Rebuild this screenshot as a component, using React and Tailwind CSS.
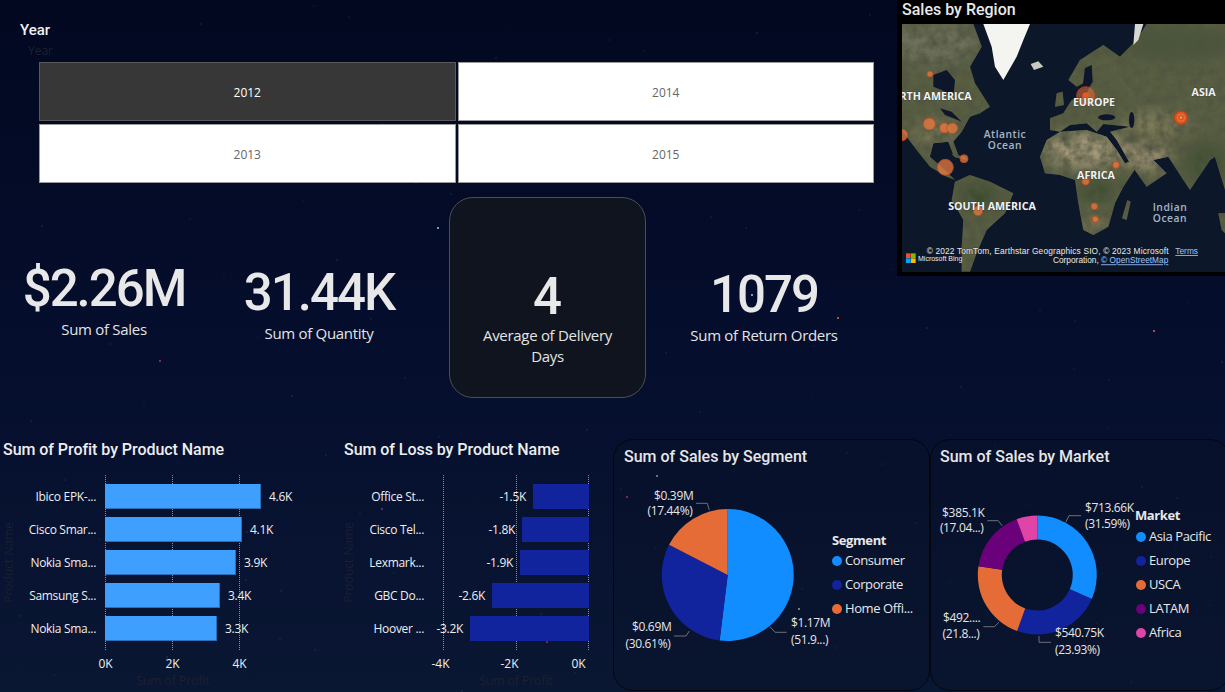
import React from "react";

const profit = [
  { name: "Ibico EPK-...", value: "4.6K", w: 156 },
  { name: "Cisco Smar...", value: "4.1K", w: 137 },
  { name: "Nokia Sma...", value: "3.9K", w: 131 },
  { name: "Samsung S...", value: "3.4K", w: 115 },
  { name: "Nokia Sma...", value: "3.3K", w: 112 },
];

const loss = [
  { name: "Office St...", value: "-1.5K", w: 56 },
  { name: "Cisco Tel...", value: "-1.8K", w: 67 },
  { name: "Lexmark...", value: "-1.9K", w: 69 },
  { name: "GBC Do...", value: "-2.6K", w: 97 },
  { name: "Hoover ...", value: "-3.2K", w: 119 },
];

const segments = [
  { name: "Consumer", pct: 51.95, color: "#118DFF" },
  { name: "Corporate", pct: 30.61, color: "#12239E" },
  { name: "Home Offi...", pct: 17.44, color: "#E66C37" },
];

const markets = [
  { name: "Asia Pacific", pct: 31.59, color: "#118DFF" },
  { name: "Europe", pct: 23.93, color: "#12239E" },
  { name: "USCA", pct: 21.8, color: "#E66C37" },
  { name: "LATAM", pct: 17.04, color: "#6B007B" },
  { name: "Africa", pct: 5.64, color: "#E044A7" },
];

const bubbles = [
  [120, 222, 9], [118, 372, 18], [163, 384, 15], [187, 385, 16], [36, 405, 17],
  [166, 502, 24], [222, 476, 12], [264, 633, 14], [678, 495, 10], [587, 544, 11],
  [613, 619, 10], [616, 658, 9],
];

const brightStars = [
  [438, 228, "#9fc4ff"], [752, 295, "#9fc4ff"], [657, 476, "#cfe0ff"], [799, 609, "#ffe8f0"],
  [838, 318, "#ff5a5a"], [1154, 331, "#ff5a5a"], [160, 361, "#a04050"], [498, 217, "#703040"],
  [627, 497, "#ff5a5a"], [547, 642, "#a03040"], [382, 509, "#7030a0"],
];

// dim specks for the night sky
const dimStars = Array.from({ length: 130 }, (_, i) => ({
  x: (i * 397 + 53) % 1225,
  y: (i * 211 + 31) % 692,
  o: 0.1 + ((i * 7) % 5) * 0.04,
}));

function arcs(items, cx, cy, r, inner) {
  let start = 0;
  return items.map((item) => {
    const a0 = (start / 100) * Math.PI * 2;
    start += item.pct;
    const a1 = (start / 100) * Math.PI * 2;
    const large = a1 - a0 > Math.PI ? 1 : 0;
    const p = (rad, a) => `${cx + rad * Math.sin(a)} ${cy - rad * Math.cos(a)}`;
    const d = inner
      ? `M${p(r, a0)} A${r} ${r} 0 ${large} 1 ${p(r, a1)} L${p(inner, a1)} A${inner} ${inner} 0 ${large} 0 ${p(inner, a0)} Z`
      : `M${cx} ${cy} L${p(r, a0)} A${r} ${r} 0 ${large} 1 ${p(r, a1)} Z`;
    return <path key={item.name} d={d} fill={item.color} />;
  });
}

function ChartLabel({ x, y, anchor = "middle", children }) {
  return (
    <text x={x} y={y} textAnchor={anchor} fontSize="12" letterSpacing="-0.35" fill="#e6e6e6" dominantBaseline="middle">
      {children}
    </text>
  );
}

function Leader({ points }) {
  return <polyline points={points} fill="none" stroke="#6b7078" strokeWidth="1" />;
}

function Grid({ positions }) {
  return positions.map((x) => (
    <div key={x} className="absolute top-0 bottom-0 w-0 border-l border-dotted border-[#8a8f98]" style={{ left: x }} />
  ));
}

function AxisTitle({ children }) {
  return <div className="text-[12px] leading-4 text-[#1c2030]">{children}</div>;
}

function ProfitChart() {
  return (
    <div className="w-[340px] shrink-0 pl-[3px]">
      <h2 className="h-[37px] pt-[2px] font-['Roboto',sans-serif] text-[16px] font-medium leading-[20px] text-[#eeeeee] tracking-[-0.05px]">
        Sum of Profit by Product Name
      </h2>
      <div className="flex">
        <div className="flex w-[12px] items-center justify-center">
          <div className="rotate-180 [writing-mode:vertical-rl]">
            <AxisTitle>Product Name</AxisTitle>
          </div>
        </div>
        <div className="flex w-[81px] flex-col gap-2 pt-[9px] text-right text-[12px] leading-[25px] tracking-[-0.3px] text-[#eeeeee]">
          {profit.map((row, i) => (
            <div key={i} className="h-[25px] truncate">{row.name}</div>
          ))}
        </div>
        <div className="relative ml-[9px] h-[175px] w-[200px]">
          <Grid positions={[0, 67, 134]} />
          <div className="relative flex flex-col gap-2 pt-[9px]">
            {profit.map((row, i) => (
              <div key={i} className="flex h-[25px] items-center">
                <div className="h-[25px] shrink-0 border-r border-b border-[#2a6fb5] bg-[#3f9fff]" style={{ width: row.w }} />
                <span className="ml-2 text-[12px] tracking-[-0.3px] text-[#eeeeee]">{row.value}</span>
              </div>
            ))}
          </div>
        </div>
      </div>
      <div className="ml-[69px] mt-[6px] flex text-center text-[12px] leading-4 text-[#eeeeee]">
        <span className="w-[67px]">0K</span>
        <span className="w-[67px]">2K</span>
        <span className="w-[67px]">4K</span>
      </div>
      <div className="ml-[103px] mt-[1px] w-[134px] text-center"><AxisTitle>Sum of Profit</AxisTitle></div>
    </div>
  );
}

function LossChart() {
  return (
    <div className="w-[273px] shrink-0 pl-[4px]">
      <h2 className="h-[37px] pt-[2px] font-['Roboto',sans-serif] text-[16px] font-medium leading-[20px] text-[#eeeeee] tracking-[-0.05px]">
        Sum of Loss by Product Name
      </h2>
      <div className="flex">
        <div className="flex w-[10px] items-center justify-center">
          <div className="rotate-180 [writing-mode:vertical-rl]">
            <AxisTitle>Product Name</AxisTitle>
          </div>
        </div>
        <div className="flex w-[70px] flex-col gap-2 pt-[9px] text-right text-[12px] leading-[25px] tracking-[-0.3px] text-[#eeeeee]">
          {loss.map((row, i) => (
            <div key={i} className="h-[25px] truncate">{row.name}</div>
          ))}
        </div>
        <div className="relative ml-[19px] h-[175px] w-[146px]">
          <Grid positions={[0, 73, 145]} />
          <div className="relative flex flex-col gap-2 pt-[9px]">
            {loss.map((row, i) => (
              <div key={i} className="flex h-[25px] items-center justify-end">
                <span className="mr-[7px] shrink-0 text-[12px] tracking-[-0.3px] text-[#eeeeee]">{row.value}</span>
                <div className="h-[25px] shrink-0 bg-[#12239E]" style={{ width: row.w }} />
              </div>
            ))}
          </div>
        </div>
      </div>
      <div className="ml-[62px] mt-[6px] flex text-center text-[12px] leading-4 text-[#eeeeee]">
        <span className="w-[73px]">-4K</span>
        <span className="w-[73px]">-2K</span>
        <span className="w-[73px]">0K</span>
      </div>
      <div className="ml-[99px] mt-[1px] w-[146px] text-center"><AxisTitle>Sum of Profit</AxisTitle></div>
    </div>
  );
}

function Legend({ title, items, className, rowsClassName }) {
  return (
    <div className={`${className} text-[13px] tracking-[-0.4px] text-[#e8e8e8]`}>
      <div className="h-[18px] text-[13px] font-bold leading-[18px]">{title}</div>
      <div className={`flex flex-col ${rowsClassName}`}>
        {items.map((item) => (
          <div key={item.name} className="flex h-[24px] items-center gap-[3px] whitespace-nowrap">
            <span className="size-[10px] shrink-0 rounded-full" style={{ background: item.color }} />
            {item.name}
          </div>
        ))}
      </div>
    </div>
  );
}

function SegmentCard() {
  return (
    <section className="mt-[1px] h-[252px] w-[317px] shrink-0 rounded-[20px] border border-[#05070f] bg-[#0a1129]/40 pl-[10px] pt-[7px]">
      <h2 className="h-[33px] font-['Roboto',sans-serif] text-[16px] font-medium leading-[20px] text-[#e6e6e6]">
        Sum of Sales by Segment
      </h2>
      <div className="-ml-[10px] flex">
        <svg viewBox="614 480 216 190" className="h-[190px] w-[216px] shrink-0 overflow-visible">
          {arcs(segments, 727.7, 575, 66)}
          <Leader points="696,503.3 707.3,503.3 709.3,510" />
          <Leader points="674,636 686,636 689.3,631" />
          <Leader points="770,626.7 775,632.3 786.7,632.3" />
          <ChartLabel x={673.7} y={497}>$0.39M</ChartLabel>
          <ChartLabel x={670} y={512}>(17.44%)</ChartLabel>
          <ChartLabel x={651.7} y={628}>$0.69M</ChartLabel>
          <ChartLabel x={648} y={645}>(30.61%)</ChartLabel>
          <ChartLabel x={791} y={624} anchor="start">$1.17M</ChartLabel>
          <ChartLabel x={791} y={641} anchor="start">(51.9...)</ChartLabel>
        </svg>
        <Legend title="Segment" items={segments} className="ml-[2px] mt-[51px]" />
      </div>
    </section>
  );
}

function MarketCard() {
  return (
    <section className="mt-[1px] h-[252px] w-[300px] shrink-0 rounded-[20px] border border-[#05070f] bg-[#0a1129]/40 pl-[9px] pt-[7px]">
      <h2 className="h-[33px] font-['Roboto',sans-serif] text-[16px] font-medium leading-[20px] text-[#e6e6e6]">
        Sum of Sales by Market
      </h2>
      <div className="-ml-[9px] flex">
        <svg viewBox="931 480 204 190" className="h-[190px] w-[204px] shrink-0 overflow-visible">
          {arcs(markets, 1037.3, 575, 59.5, 35.5)}
          <Leader points="1065.7,522.3 1069,515.7 1081,515.7" />
          <Leader points="987.3,520.7 998.3,520.7 1002.3,526" />
          <Leader points="983.3,626.7 994.3,626.7 999,622.3" />
          <Leader points="1039,636 1039,642.3 1051,642.3" />
          <ChartLabel x={1085} y={509} anchor="start">$713.66K</ChartLabel>
          <ChartLabel x={1085} y={525} anchor="start">(31.59%)</ChartLabel>
          <ChartLabel x={963.3} y={514}>$385.1K</ChartLabel>
          <ChartLabel x={961.7} y={529}>(17.04...)</ChartLabel>
          <ChartLabel x={961.7} y={619}>$492....</ChartLabel>
          <ChartLabel x={961} y={635}>(21.8...)</ChartLabel>
          <ChartLabel x={1055} y={634} anchor="start">$540.75K</ChartLabel>
          <ChartLabel x={1055} y={651} anchor="start">(23.93%)</ChartLabel>
        </svg>
        <Legend title="Market" items={markets} className="mt-[26px]" rowsClassName="mt-[1px] ml-[1px]" />
      </div>
    </section>
  );
}

// satellite map, drawn in 3x coordinates so it lines up with the zoomed reference
function WorldMap() {
  return (
    <svg viewBox="36 72 969 744" preserveAspectRatio="none" className="block h-[248px] w-[323px]">
      <defs>
        <filter id="soft" x="-10%" y="-10%" width="120%" height="120%"><feGaussianBlur stdDeviation="2" /></filter>
        <filter id="softer" x="-100%" y="-100%" width="300%" height="300%"><feGaussianBlur stdDeviation="22" /></filter>
        <filter id="grain" x="0" y="0" width="100%" height="100%">
          <feTurbulence type="fractalNoise" baseFrequency="0.035" numOctaves="4" seed="7" />
          <feColorMatrix values="0 0 0 0 0.08  0 0 0 0 0.09  0 0 0 0 0.05  0 0 0 1.8 -0.55" />
        </filter>
        <clipPath id="land">
          <path d="M36 72 L250 72 L275 140 L240 200 L255 250 L300 320 L270 340 L240 350 L215 395 L190 425 L205 465 L190 465 L175 425 L130 430 L120 470 L165 510 L195 540 L170 530 L120 500 L80 450 L50 410 L36 390 Z" />
          <path d="M195 545 L240 525 L300 545 L370 580 L345 640 L290 690 L260 760 L240 815 L215 815 L215 740 L220 660 L185 600 Z" />
          <path d="M450 470 L470 420 L510 395 L590 390 L650 410 L680 450 L705 490 L760 470 L700 560 L675 610 L655 680 L610 705 L580 690 L565 610 L555 540 L510 525 L465 520 Z" />
          <path d="M480 390 L480 355 L520 340 L545 300 L590 290 L600 240 L560 260 L535 240 L570 180 L640 135 L690 170 L740 120 L770 72 L1005 72 L1005 570 L975 470 L960 480 L900 570 L880 540 L835 470 L790 480 L830 520 L770 560 L720 490 L680 420 L660 395 L720 380 L640 372 L620 395 L590 370 L540 375 L510 395 Z" />
          <path d="M500 280 L518 275 L522 315 L495 320 Z" />
          <path d="M712 600 L722 605 L710 660 L696 655 Z" />
          <path d="M985 640 L1005 640 L1005 700 L995 690 Z" />
          <path d="M185 462 L225 470 L232 480 L195 472 Z" />
        </clipPath>
      </defs>
      <rect x="36" y="72" width="969" height="744" fill="#0c1829" />
      <g filter="url(#soft)">
        <g clipPath="url(#land)">
          <rect x="36" y="72" width="969" height="744" fill="#585e42" />
          <ellipse cx="130" cy="130" rx="140" ry="60" fill="#6d705c" filter="url(#softer)" />
          <ellipse cx="860" cy="130" rx="170" ry="50" fill="#4a553a" filter="url(#softer)" />
          <ellipse cx="590" cy="450" rx="130" ry="50" fill="#a69a7c" filter="url(#softer)" />
          <ellipse cx="770" cy="470" rx="70" ry="40" fill="#9c8f72" filter="url(#softer)" />
          <ellipse cx="800" cy="370" rx="110" ry="30" fill="#86805e" filter="url(#softer)" />
          <ellipse cx="620" cy="575" rx="45" ry="30" fill="#36482a" filter="url(#softer)" />
          <ellipse cx="265" cy="590" rx="55" ry="35" fill="#34492a" filter="url(#softer)" />
          <ellipse cx="130" cy="400" rx="70" ry="30" fill="#7c7858" filter="url(#softer)" />
          <ellipse cx="610" cy="665" rx="40" ry="30" fill="#7e7552" filter="url(#softer)" />
          <ellipse cx="950" cy="490" rx="60" ry="60" fill="#3f5030" filter="url(#softer)" />
          <rect x="36" y="72" width="969" height="744" filter="url(#grain)" />
        </g>
        <path d="M130 225 L170 210 L195 240 L190 290 L155 270 L130 260 Z" fill="#0c1829" />
        <path d="M150 325 L185 335 L215 365 L190 355 L165 345 Z" fill="#10172a" />
        <ellipse cx="650" cy="352" rx="26" ry="9" fill="#0c1829" />
        <ellipse cx="725" cy="360" rx="8" ry="24" fill="#0c1829" />
        <path d="M585 205 L605 195 L608 245 L590 275 L575 280 Z" fill="#0c1829" />
        <path d="M620 395 L650 378 L664 392 L640 402 Z" fill="#0c1829" />
        <path d="M280 72 L420 72 L400 120 L380 170 L340 240 L315 200 L305 140 Z" fill="#f4f4f0" />
        <path d="M735 72 L760 72 L745 120 L730 135 Z" fill="#d8d8d2" />
        <path d="M422 192 L445 184 L460 200 L432 210 Z" fill="#c9c9c2" />
      </g>
      {bubbles.map(([x, y, r], i) => (
        <circle key={i} cx={x} cy={y} r={r} fill="#ea7a42" fillOpacity="0.75" stroke="#c9471c" strokeWidth="2.5" />
      ))}
      <circle cx="587" cy="287" r="27" fill="#ea7a42" fillOpacity="0.5" stroke="#c9471c" strokeWidth="2.5" />
      <circle cx="587" cy="287" r="19" fill="none" stroke="#c9471c" strokeWidth="2" />
      <circle cx="587" cy="287" r="10" fill="#e8581f" />
      <circle cx="873" cy="353" r="20" fill="#d9541f" stroke="#c03c12" strokeWidth="3" />
      <circle cx="873" cy="353" r="11" fill="none" stroke="#f09060" strokeWidth="2" />
      <circle cx="873" cy="353" r="4" fill="#f09060" />

      <g fontFamily="'Open Sans', sans-serif" fontWeight="700" fontSize="32" fill="#f2f2f2" stroke="#20242c" strokeWidth="1" paintOrder="stroke">
        <text x="245" y="299" textAnchor="end">NORTH AMERICA</text>
        <text x="612" y="317" textAnchor="middle">EUROPE</text>
        <text x="941" y="289" textAnchor="middle">ASIA</text>
        <text x="618" y="536" textAnchor="middle">AFRICA</text>
        <text x="306" y="629" textAnchor="middle">SOUTH AMERICA</text>
      </g>
      <g fontFamily="'Open Sans', sans-serif" fontWeight="600" fontSize="31" fill="#a6b3c4" textAnchor="middle" letterSpacing="1.5">
        <text x="345" y="414">Atlantic</text>
        <text x="345" y="448">Ocean</text>
        <text x="840" y="632">Indian</text>
        <text x="840" y="667">Ocean</text>
      </g>
      <g fontFamily="'Liberation Sans', sans-serif" fontSize="25" fill="#e8e8e8" stroke="#222" strokeWidth="0.8" paintOrder="stroke">
        <text x="110" y="762" textLength="726">© 2022 TomTom, Earthstar Geographics SIO, © 2023 Microsoft</text>
        <text x="835" y="790" textAnchor="end">Corporation, <tspan fill="#9cc3ff" textDecoration="underline">© OpenStreetMap</tspan></text>
        <text x="856" y="762" fill="#9cc3ff" textDecoration="underline">Terms</text>
        <text x="84" y="782" fontSize="21">Microsoft Bing</text>
      </g>
      <rect x="48" y="760" width="14" height="14" fill="#f25022" />
      <rect x="63" y="760" width="14" height="14" fill="#7fba00" />
      <rect x="48" y="775" width="14" height="14" fill="#00a4ef" />
      <rect x="63" y="775" width="14" height="14" fill="#ffb900" />
    </svg>
  );
}

function YearButton({ year, active }) {
  return (
    <div
      className={
        active
          ? "flex h-[59px] items-center justify-center border border-[#5a5a5a] bg-[#373737] pt-[2px] text-[12px] text-white"
          : "flex h-[59px] items-center justify-center border border-[#9a9a9a] bg-white pt-[2px] text-[12px] text-[#666666]"
      }
    >
      {year}
    </div>
  );
}

function Kpi({ value, label, className }) {
  return (
    <div className={`flex flex-col items-center text-center ${className}`}>
      <div className="font-['Roboto',sans-serif] text-[51px] font-medium leading-[56px] tracking-[-2px] text-[#e8e8e8]">
        {value}
      </div>
      <div className="mt-[2px] text-[15px] leading-[21px] text-[#e4e4e4] tracking-[-0.3px]">{label}</div>
    </div>
  );
}

export default function App() {
  return (
    <div className="relative h-[692px] w-[1225px] overflow-hidden bg-gradient-to-b from-[#020820] via-[#050e2d] to-[#0a1733] font-['Open_Sans',sans-serif] text-[12px]">
      <svg className="absolute inset-0" width="1225" height="692">
        {dimStars.map((s, i) => (
          <circle key={i} cx={s.x} cy={s.y} r="0.8" fill="#8fa3c8" opacity={s.o} />
        ))}
        {brightStars.map(([x, y, c], i) => (
          <circle key={i} cx={x} cy={y} r="1" fill={c} />
        ))}
      </svg>

      <div className="relative flex h-[438px]">
        <div className="w-[897px]">
          <div className="pl-[20px] pt-[20px] font-['Roboto',sans-serif] text-[15px] font-medium leading-[20px] text-[#f0f0f0]">Year</div>
          <div className="pl-[28px] text-[12px] leading-[22px] text-[#1c2030]">Year</div>
          <div className="ml-[39px] grid w-[835px] grid-cols-2 gap-x-[2px] gap-y-[3px]">
            <YearButton year="2012" active />
            <YearButton year="2014" />
            <YearButton year="2013" />
            <YearButton year="2015" />
          </div>
          <div className="mt-[14px] flex h-[201px] items-start">
            <Kpi value="$2.26M" label="Sum of Sales" className="w-[208px] pt-[64px]" />
            <Kpi value="31.44K" label="Sum of Quantity" className="w-[222px] pt-[68px]" />
            <div className="ml-[19px] flex h-[201px] w-[197px] flex-col items-center rounded-[24px] border border-[#4a4e57] bg-[#10141f] pt-[71px] text-center">
              <div className="font-['Roboto',sans-serif] text-[51px] font-medium leading-[56px] text-[#e8e8e8]">4</div>
              <div className="w-[150px] text-[15px] leading-[21px] text-[#e4e4e4] tracking-[-0.3px]">Average of Delivery Days</div>
            </div>
            <Kpi value="1079" label="Sum of Return Orders" className="w-[236px] pt-[70px]" />
          </div>
        </div>
        <section className="h-[276px] w-[328px] bg-black pl-[5px]">
          <h2 className="h-[24px] font-['Roboto',sans-serif] text-[16px] font-medium leading-[20px] text-[#e8e8e8]">Sales by Region</h2>
          <WorldMap />
        </section>
      </div>

      <div className="relative flex items-start">
        <ProfitChart />
        <LossChart />
        <SegmentCard />
        <MarketCard />
      </div>
    </div>
  );
}
